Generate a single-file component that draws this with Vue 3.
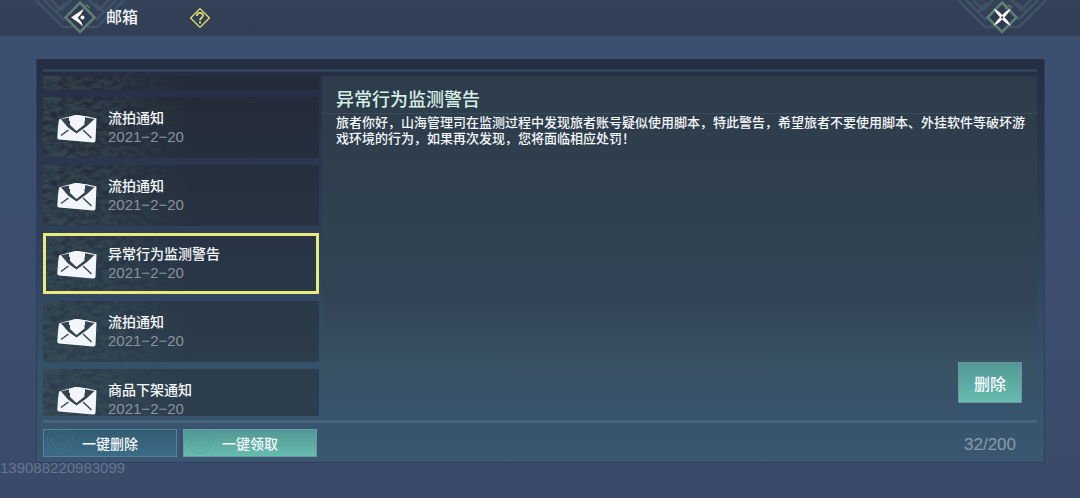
<script setup>
import { ref } from 'vue'

const selected = ref(2)
const mails = [
  { title: '流拍通知', date: '2021−2−20' },
  { title: '流拍通知', date: '2021−2−20' },
  { title: '异常行为监测警告', date: '2021−2−20' },
  { title: '流拍通知', date: '2021−2−20' },
  { title: '商品下架通知', date: '2021−2−20' },
]
</script>

<template>
  <div class="page">
    <svg class="defs" aria-hidden="true">
      <defs>
        <filter id="grunge" x="0" y="0" width="100%" height="100%" color-interpolation-filters="sRGB">
          <feTurbulence type="fractalNoise" baseFrequency="0.12 0.2" numOctaves="4" seed="8" />
          <feColorMatrix values="0 0 0 0 0.24  0 0 0 0 0.33  0 0 0 0 0.35  3 0 0 0 -0.9" />
          <feComposite in2="SourceGraphic" operator="in" />
        </filter>
        <linearGradient id="fade">
          <stop offset="0" stop-color="#fff" stop-opacity="0.65" />
          <stop offset="0.5" stop-color="#fff" stop-opacity="0.4" />
          <stop offset="1" stop-color="#fff" stop-opacity="0" />
        </linearGradient>
        <g id="lattice" fill="none" stroke="#47606f" stroke-width="2.6" opacity="0.6">
          <path d="M4 0L31 27H41M92 0L65 27H55" />
          <path d="M12 0L32 20M84 0L64 20" />
          <path d="M19 0L29 10L39 0M77 0L67 10L57 0" />
          <path d="M24 12L33 3M72 12L63 3" />
        </g>
        <g id="frame">
          <path d="M48 2.5L62.5 17.5L48 32L33.5 17.5Z" fill="#2f3c4f" stroke="#607d75" stroke-width="2.6" />
          <path d="M51 9L55 5L58 8" fill="none" stroke="#607d75" stroke-width="1.2" />
        </g>
      </defs>
    </svg>

    <header class="bar">
      <button class="emblem" type="button" aria-label="返回">
        <svg width="96" height="36" viewBox="0 0 96 36">
          <use href="#lattice" />
          <use href="#frame" />
          <path d="M51.5 9Q44 14 39 17.5Q45 21 51 26.5Q49.5 21 45.5 17.5Q50 14 51.5 9Z" fill="#fff" />
          <circle cx="50.5" cy="17.5" r="2" fill="#fff" />
        </svg>
      </button>
      <h1>邮箱</h1>
      <button class="help" type="button" aria-label="帮助">
        <svg width="22" height="22" viewBox="0 0 22 22" fill="none" stroke="#e6e16f">
          <path d="M11 1.6L20.4 11L11 20.4L1.6 11Z" stroke-width="1.3" />
          <path d="M7.9 8.9C7.9 4.8 14.1 4.9 14 8.6C13.9 10.8 11 10.7 11 13.3" stroke-width="1.7" />
          <path d="M11 14.6V16.4" stroke-width="1.9" />
        </svg>
      </button>
      <button class="emblem close" type="button" aria-label="关闭">
        <svg width="96" height="36" viewBox="0 0 96 36">
          <use href="#lattice" />
          <use href="#frame" />
          <path d="M39.5 8.500Q46 11.500 48.200 15.200Q50.500 11.500 57 8.500Q54 14 50.500 17.300Q54 20.500 57 26Q51 23 48.200 19.500Q45.500 23 39.500 25.700Q42.500 20.500 46 17.300Q42.500 14 39.500 8.500Z" fill="#fff" />
          <circle cx="48.2" cy="17.4" r="1.2" fill="#46505f" />
        </svg>
      </button>
    </header>

    <main class="panel">
      <div class="content">
        <ul class="list">
          <li class="above">
            <svg class="texture" aria-hidden="true"><rect width="150" height="61" fill="url(#fade)" filter="url(#grunge)" /></svg>
          </li>
          <li v-for="(mail, i) in mails" :key="i">
            <button type="button" class="mail" :class="{ active: selected === i }" @click="selected = i">
              <svg class="texture" aria-hidden="true"><rect width="150" height="61" fill="url(#fade)" filter="url(#grunge)" /></svg>
              <svg class="envelope" width="42" height="30" viewBox="0 0 42 30" aria-hidden="true">
                <path d="M3 5.5Q11 2.5 20 1Q31 1.5 40.5 4.5L39.5 27Q39 28.5 37 28.5L3 25.5Q1 25 1.3 23L2 13Z" fill="#f2f5fb" />
                <path d="M5 5.2L13 3.4V7H29V3.3L38.5 5L31 12L20.5 19.5L12 13.5Z" fill="#34434f" />
                <path d="M14 3.2Q21 -1 28.5 3.2V10.5L20.5 17L14 11Z" fill="#f2f5fb" />
                <path d="M5 21.5L12.5 16M27 16L35.5 24" fill="none" stroke="#3a4651" stroke-width="1.5" />
              </svg>
              <span class="info">
                <span class="name">{{ mail.title }}</span>
                <span class="date">{{ mail.date }}</span>
              </span>
            </button>
          </li>
        </ul>

        <article class="detail">
          <h2>异常行为监测警告</h2>
          <p>旅者你好，山海管理司在监测过程中发现旅者账号疑似使用脚本，特此警告，希望旅者不要使用脚本、外挂软件等破坏游戏环境的行为，如果再次发现，您将面临相应处罚！</p>
          <button type="button" class="green remove">删除</button>
        </article>
      </div>

      <footer class="actions">
        <button type="button" class="blue">
          <svg class="rings" width="32" height="26" viewBox="0 0 32 26" aria-hidden="true"><g fill="none" stroke="#6da0ad" opacity="0.15"><circle cx="16" cy="10" r="5" /><circle cx="16" cy="10" r="9" /><circle cx="16" cy="10" r="13" /></g></svg>
          一键删除
        </button>
        <button type="button" class="green">
          <svg class="rings" width="32" height="26" viewBox="0 0 32 26" aria-hidden="true"><g fill="none" stroke="#3b7f83" opacity="0.25"><circle cx="16" cy="10" r="5" /><circle cx="16" cy="10" r="9" /><circle cx="16" cy="10" r="13" /></g></svg>
          一键领取
        </button>
        <span class="count">32/200</span>
      </footer>
    </main>
    <div class="uid">139088220983099</div>
  </div>
</template>

<style>
body {
  background: #3c4a6b;
}
</style>

<style scoped>
.page {
  box-sizing: border-box;
  min-height: 100vh;
  background: linear-gradient(#3b4f70, #3c4d6e 60%, #3b4a6b);
  font-family: "Liberation Sans", "Noto Sans CJK SC", sans-serif;
  color: #f5f8fb;
}
.page * {
  box-sizing: border-box;
}
.defs {
  position: absolute;
  width: 0;
  height: 0;
}
button {
  margin: 0;
  padding: 0;
  border: 0;
  background: none;
  color: inherit;
  font-family: inherit;
  font-weight: 500;
  cursor: pointer;
}
svg {
  display: block;
}
.bar {
  display: flex;
  align-items: center;
  height: 36px;
  padding: 0 30px 0 32px;
  background: linear-gradient(#344159, #323e55);
}
.emblem {
  height: 36px;
}
.bar h1 {
  margin: 0 0 0 -22px;
  font-size: 16px;
  font-weight: 500;
  line-height: 36px;
}
.help {
  margin-left: 51px;
}
.close {
  margin-left: auto;
}
.panel {
  margin: 23px 35px 0 36px;
  padding: 9px 7px 5px 6px;
  border: 1px solid #2d3f5c;
  border-top-color: #29334a;
  background: linear-gradient(#252e43, #2b3950 30%, #355069 75%, #3b5671);
}
.content {
  display: grid;
  grid-template-columns: 276px 1fr;
  gap: 3px;
  height: 354px;
  padding: 4px 0;
  border-top: 3px solid #33435a;
  border-bottom: 3px solid #48637f;
}
.list {
  display: flex;
  flex-direction: column;
  gap: 7px;
  height: 340px;
  margin: 0;
  padding: 0;
  overflow: hidden;
  list-style: none;
}
.list li {
  flex: none;
  height: 61px;
}
.list .above {
  position: relative;
  height: 14px;
  overflow: hidden;
  background: rgba(34, 37, 43, 0.5);
}
.mail {
  position: relative;
  display: flex;
  align-items: center;
  gap: 10px;
  width: 100%;
  height: 61px;
  padding: 0 13px 2px;
  background: rgba(34, 37, 43, 0.45);
  text-align: left;
}
.mail.active {
  padding: 0 10px 2px;
  border: 3px solid #e8ea7c;
}
.texture {
  position: absolute;
  top: 0;
  left: 0;
  width: 150px;
  height: 100%;
}
.envelope {
  position: relative;
  margin-top: 4px;
}
.info {
  position: relative;
  display: flex;
  flex-direction: column;
}
.name {
  font-size: 14px;
  line-height: 20px;
}
.date {
  font-size: 15px;
  line-height: 18px;
  color: #8a939c;
}
.detail {
  display: flex;
  flex-direction: column;
  padding: 12px 8px 13px 14px;
  background:
    linear-gradient(rgba(104, 136, 142, 0.2), rgba(104, 136, 142, 0.2)) 0 37px / 100% 1px no-repeat,
    linear-gradient(rgba(48, 66, 76, 0.7), rgba(50, 66, 79, 0.6) 65%, rgba(59, 82, 94, 0.5) 85%, rgba(59, 86, 113, 0));
}
.detail h2 {
  margin: 0;
  font-size: 18px;
  font-weight: 500;
  line-height: 24px;
  color: #d7f0e7;
}
.detail p {
  margin: 3px 0 0;
  font-size: 13px;
  font-weight: 500;
  line-height: 16px;
}
.green,
.blue {
  position: relative;
  height: 28px;
  border: 1px solid #6e95a2;
  font-size: 14px;
}
.green {
  background: linear-gradient(#529895, #66bcae);
}
.blue {
  border-color: #5c7f98;
  background: linear-gradient(#335b73, #3a6c87);
}
.rings {
  position: absolute;
  top: 0;
  left: 0;
}
.remove {
  align-self: flex-end;
  width: 64px;
  height: 41px;
  margin-top: auto;
  margin-right: 7px;
  font-size: 16px;
}
.actions {
  display: flex;
  align-items: center;
  gap: 6px;
  padding-top: 6px;
}
.actions button {
  width: 134px;
}
.count {
  margin-left: auto;
  margin-right: 21px;
  padding-top: 4px;
  font-size: 17px;
  line-height: 24px;
  color: #899da8;
}
.uid {
  position: relative;
  margin-top: -4px;
  font-size: 15px;
  line-height: 18px;
  color: #68738d;
}
</style>
